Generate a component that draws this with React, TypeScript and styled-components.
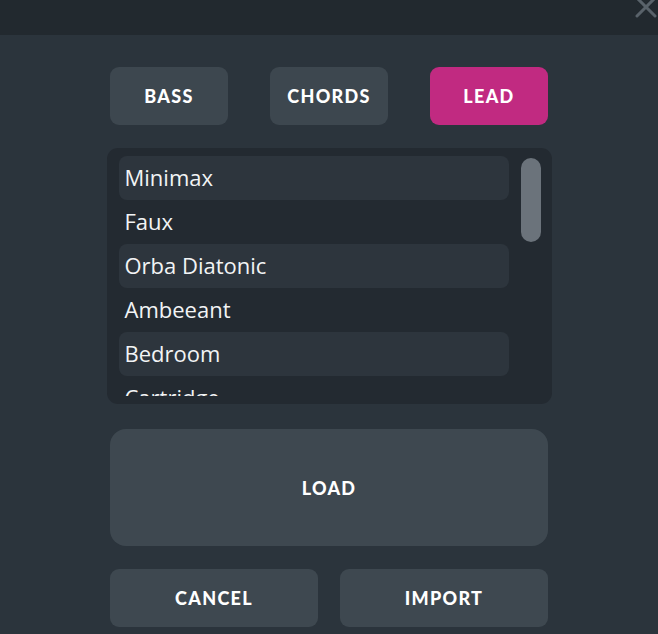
import { useState } from "react";
import styled, { createGlobalStyle } from "styled-components";

const GlobalStyle = createGlobalStyle`
  html, body {
    margin: 0;
    padding: 0;
    background: #2b343c;
  }
  * {
    box-sizing: border-box;
  }
`;

const CATEGORIES = ["BASS", "CHORDS", "LEAD"];

const PRESETS = [
  "Minimax",
  "Faux",
  "Orba Diatonic",
  "Ambeeant",
  "Bedroom",
  "Cartridge",
  "Glass Keys",
  "Sawtooth",
];

const App = (): JSX.Element => {
  const [category, setCategory] = useState("LEAD");
  const [selected, setSelected] = useState<string | null>(null);

  return (
    <>
      <GlobalStyle />
      <Page>
        <Header>
          <Close aria-label="close">
            <svg width="22" height="22" viewBox="0 0 22 22">
              <path
                d="M2 -2 L20 16 M20 -2 L2 16"
                stroke="#59626a"
                strokeWidth="3"
                strokeLinecap="round"
              />
            </svg>
          </Close>
        </Header>

        <Body>
          <Tabs>
            {CATEGORIES.map((c) => (
              <Tab key={c} active={c === category} onClick={() => setCategory(c)}>
                {c}
              </Tab>
            ))}
          </Tabs>

          <ListPanel>
            <List>
              {PRESETS.map((p, i) => (
                <Row
                  key={p}
                  striped={i % 2 === 0}
                  selected={p === selected}
                  onClick={() => setSelected(p)}
                >
                  {p}
                </Row>
              ))}
            </List>
            <Track>
              <Thumb />
            </Track>
          </ListPanel>

          <LoadButton>LOAD</LoadButton>

          <Footer>
            <ActionButton>CANCEL</ActionButton>
            <ActionButton>IMPORT</ActionButton>
          </Footer>
        </Body>
      </Page>
    </>
  );
};

export default App;

const Page = styled.div`
  width: 658px;
  height: 634px;
  overflow: hidden;
  background: #2b343c;
`;

const Header = styled.div`
  position: relative;
  height: 35px;
  background: #22292f;
`;

const Close = styled.button`
  position: absolute;
  top: 0;
  right: 1px;
  width: 22px;
  height: 22px;
  padding: 0;
  border: none;
  background: none;
  cursor: pointer;
  svg {
    display: block;
  }
`;

const Body = styled.div`
  width: 445px;
  margin: 0 auto;
  padding-top: 32px;
  display: flex;
  flex-direction: column;
  align-items: center;
`;

const buttonText = `
  font-family: Lato, "Noto Sans", sans-serif;
  font-weight: 900;
  font-size: 18px;
  letter-spacing: 1.3px;
  color: #ffffff;
  border: none;
  cursor: pointer;
`;

const Tabs = styled.div`
  width: 438px;
  display: flex;
  justify-content: space-between;
`;

const Tab = styled.button<{ active: boolean }>`
  ${buttonText}
  width: 118px;
  height: 58px;
  border-radius: 9px;
  background: ${(props) => (props.active ? "#c12a81" : "#3d474f")};
`;

const ListPanel = styled.div`
  margin-top: 23px;
  width: 445px;
  height: 256px;
  padding: 8px 11px 8px 12px;
  border-radius: 11px;
  background: #232a31;
  display: flex;
  gap: 12px;
`;

const List = styled.div`
  flex: 1;
  height: 240px;
  overflow: hidden;
`;

const Row = styled.div<{ striped: boolean; selected: boolean }>`
  height: 44px;
  line-height: 42px;
  padding-left: 6px;
  border-radius: 8px;
  font-family: "Open Sans", "Noto Sans", sans-serif;
  font-size: 22px;
  color: #f2f4f5;
  white-space: nowrap;
  cursor: pointer;
  background: ${(props) =>
    props.selected ? "#3d474f" : props.striped ? "#2d353d" : "transparent"};
`;

const Track = styled.div`
  width: 20px;
  padding-top: 2px;
`;

const Thumb = styled.div`
  width: 20px;
  height: 84px;
  border-radius: 10px;
  background: #6b737b;
`;

const LoadButton = styled.button`
  ${buttonText}
  margin-top: 25px;
  width: 438px;
  height: 117px;
  border-radius: 16px;
  background: #3e4850;
`;

const Footer = styled.div`
  margin-top: 23px;
  width: 438px;
  display: flex;
  gap: 22px;
`;

const ActionButton = styled.button`
  ${buttonText}
  flex: 1;
  height: 58px;
  border-radius: 9px;
  background: #3e4850;
`;
